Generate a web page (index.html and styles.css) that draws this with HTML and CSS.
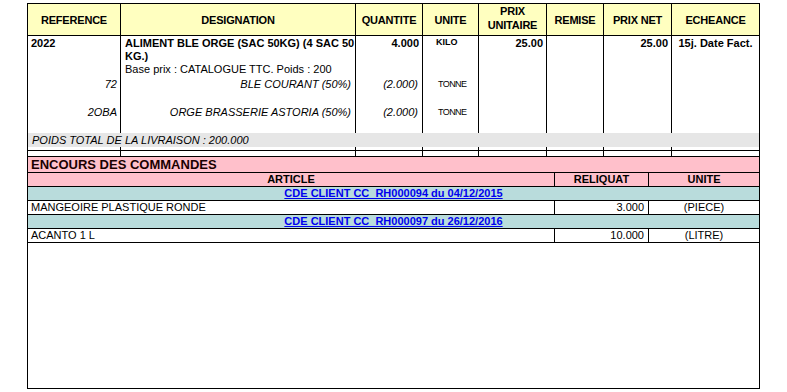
FILE: index.html
```html
<!DOCTYPE html>
<html lang="fr">
<head>
<meta charset="utf-8">
<title>Commande</title>
<link rel="stylesheet" href="styles.css">
</head>
<body>
<div class="sheet">
  <div class="grid8 head">
    <div class="col">REFERENCE</div>
    <div class="col">DESIGNATION</div>
    <div class="col">QUANTITE</div>
    <div class="col">UNITE</div>
    <div class="col two">PRIX<br>UNITAIRE</div>
    <div class="col">REMISE</div>
    <div class="col">PRIX NET</div>
    <div class="col">ECHEANCE</div>
  </div>

  <div class="grid8 body">
    <div class="col">
      <div class="main b pl">2022</div>
      <div class="sub i r pr">72</div>
      <div class="sub i r pr">2OBA</div>
    </div>
    <div class="col">
      <div class="main pl2"><span class="b">ALIMENT BLE ORGE (SAC 50KG) (4 SAC 50<br>KG.)</span><br>Base prix : CATALOGUE TTC. Poids : 200</div>
      <div class="sub i r pr2">BLE COURANT (50%)</div>
      <div class="sub i r pr2">ORGE BRASSERIE ASTORIA (50%)</div>
    </div>
    <div class="col">
      <div class="main b r pr">4.000</div>
      <div class="sub i r pr2">(2.000)</div>
      <div class="sub i r pr2">(2.000)</div>
    </div>
    <div class="col">
      <div class="main"><span class="unit b">KILO</span></div>
      <div class="sub"><span class="unit t">TONNE</span></div>
      <div class="sub"><span class="unit t">TONNE</span></div>
    </div>
    <div class="col">
      <div class="main b r pr">25.00</div>
    </div>
    <div class="col"></div>
    <div class="col">
      <div class="main b r pr">25.00</div>
    </div>
    <div class="col">
      <div class="main b c">15j. Date Fact.</div>
    </div>
  </div>

  <div class="total">POIDS TOTAL DE LA LIVRAISON : 200.000</div>

  <div class="grid8 stub1">
    <div class="col"></div><div class="col"></div><div class="col"></div><div class="col"></div>
    <div class="col"></div><div class="col"></div><div class="col"></div><div class="col"></div>
  </div>
  <div class="grid8 stub2">
    <div class="col"></div><div class="col"></div><div class="col"></div><div class="col"></div>
    <div class="col"></div><div class="col"></div><div class="col"></div><div class="col"></div>
  </div>

  <section class="encours">
    <div class="title">ENCOURS DES COMMANDES</div>
    <div class="grid3 thead">
      <div class="cell">ARTICLE</div>
      <div class="cell">RELIQUAT</div>
      <div class="cell">UNITE</div>
    </div>
    <div class="cde"><a href="#">CDE CLIENT CC&nbsp; RH000094 du 04/12/2015</a></div>
    <div class="grid3 line">
      <div class="cell pl">MANGEOIRE PLASTIQUE RONDE</div>
      <div class="cell r pr4">3.000</div>
      <div class="cell c">(PIECE)</div>
    </div>
    <div class="cde"><a href="#">CDE CLIENT CC&nbsp; RH000097 du 26/12/2016</a></div>
    <div class="grid3 line">
      <div class="cell pl">ACANTO 1 L</div>
      <div class="cell r pr4">10.000</div>
      <div class="cell c">(LITRE)</div>
    </div>
  </section>
</div>
</body>
</html>
```

FILE: styles.css
```css
html, body {
  margin: 0;
  padding: 0;
  background: #fff;
}
body {
  padding: 3px 0 0 27px;
  font-family: "Liberation Sans", Arial, sans-serif;
  font-size: 11px;
  color: #000;
}
.sheet {
  width: 733px;
  height: 386px;
  border: 1px solid #000;
  box-sizing: border-box;
}
.grid8 {
  display: grid;
  grid-template-columns: 93px 235px 67px 56px 68px 57px 68px 87px;
}
.grid8 > .col {
  border-right: 1px solid #000;
  box-sizing: border-box;
  min-width: 0;
}
.grid8 > .col:last-child {
  border-right: 0;
}
.head .col {
  height: 32px;
  border-bottom: 1px solid #000;
  background: #ffffc0;
  display: flex;
  align-items: center;
  justify-content: center;
  text-align: center;
  font-weight: bold;
  font-size: 11px;
  line-height: 14px;
  letter-spacing: -0.2px;
  padding-top: 1px;
}
.head .col.two {
  padding-top: 0;
  padding-bottom: 4px;
}
.body {
  height: 97px;
}
.main {
  height: 41px;
  padding-top: 1px;
  line-height: 13px;
  box-sizing: border-box;
  white-space: nowrap;
}
.sub {
  height: 14px;
  margin-bottom: 14px;
  line-height: 14px;
  white-space: nowrap;
}
.b { font-weight: bold; }
.i { font-style: italic; }
.r { text-align: right; }
.c { text-align: center; }
.pl { padding-left: 3px; }
.pl2 { padding-left: 4px; }
.pr { padding-right: 3px; }
.pr2 { padding-right: 4px; }
.pr4 { padding-right: 4px; }
.unit {
  display: block;
  font-size: 9px;
  line-height: 10px;
  padding-left: 13px;
}
.unit.t {
  line-height: 14px;
  padding-left: 15px;
  letter-spacing: -0.6px;
}
.total {
  height: 14px;
  line-height: 14px;
  background: #e6e6e6;
  font-style: italic;
  padding-left: 4px;
}
.stub1 .col {
  height: 4px;
  border-bottom: 1px solid #000;
}
.stub2 .col {
  height: 5px;
}
.encours {
  border-top: 1px solid #000;
}
.title {
  height: 16px;
  box-sizing: border-box;
  border-bottom: 1px solid #000;
  background: #ffc0cb;
  font-size: 13px;
  font-weight: bold;
  line-height: 15px;
  padding-left: 3px;
  color: #1a0000;
}
.grid3 {
  display: grid;
  grid-template-columns: 527px 94px 110px;
  height: 14px;
  box-sizing: border-box;
  border-bottom: 1px solid #000;
}
.grid3 .cell {
  border-right: 1px solid #000;
  line-height: 13px;
  white-space: nowrap;
  min-width: 0;
}
.grid3 .cell:last-child {
  border-right: 0;
}
.thead {
  background: #ffc0cb;
}
.thead .cell {
  font-weight: bold;
  text-align: center;
}
.cde {
  height: 14px;
  box-sizing: border-box;
  border-bottom: 1px solid #000;
  background: #b9dcdc;
  text-align: center;
  line-height: 13px;
}
.cde a {
  color: #0000ee;
  font-weight: bold;
  text-decoration: underline;
}
```
